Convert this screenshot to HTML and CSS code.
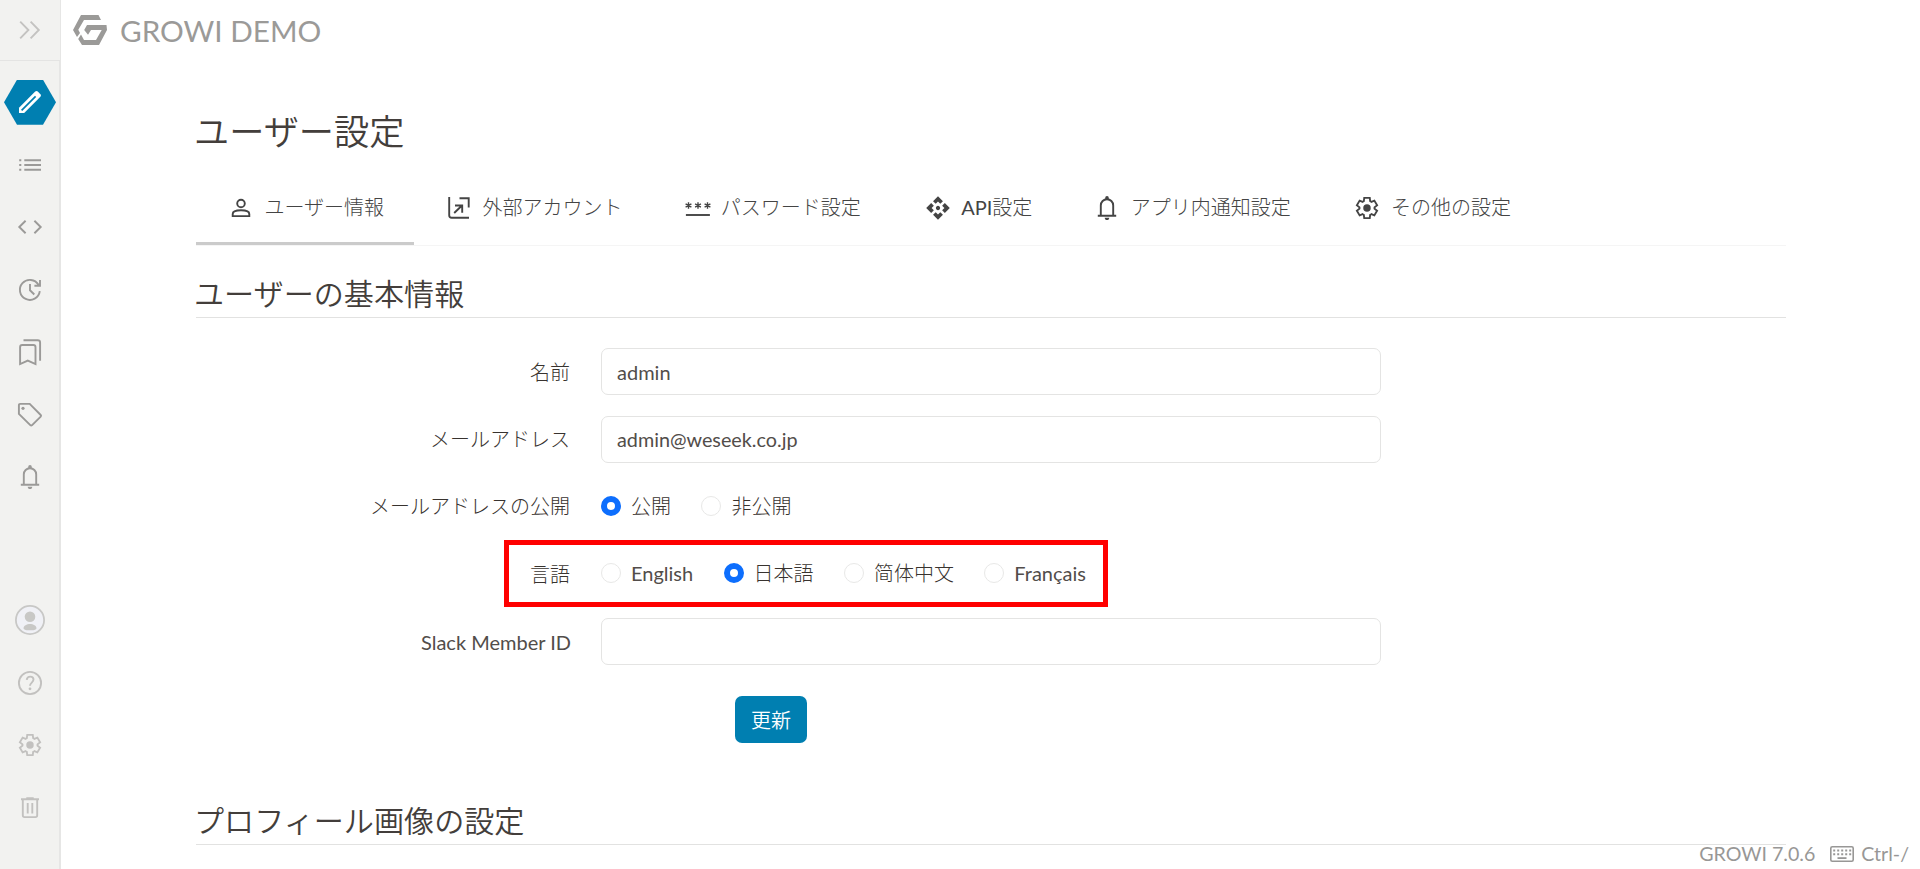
FILE: index.html
```html
<!DOCTYPE html>
<html lang="ja">
<head>
<meta charset="utf-8">
<title>ユーザー設定 - GROWI DEMO</title>
<link rel="stylesheet" href="styles.css">
</head>
<body>
<svg class="defs" width="0" height="0">
  <symbol id="gear" viewBox="0 0 960 960"><g transform="translate(480 480) scale(.93) translate(-480 480)"><path fill="none" stroke="currentColor" stroke-width="74" d="M370-80l-16-128q-13-5-24.500-12T307-235l-119 50L78-375l103-78q-1-7-1-13.500v-27q0-6.500 1-13.500L78-585l110-190 119 50q11-8 23-15t24-12l16-128h220l16 128q13 5 24.500 12t22.500 15l119-50 110 190-103 78q1 7 1 13.500v27q0 6.500-2 13.500l103 78-110 190-118-50q-11 8-23 15t-24 12L590-80H370Z"/><circle cx="480" cy="-480" r="148"/></g></symbol>
  <symbol id="bell" viewBox="0 0 24 24"><path class="line" d="M2.800 19.800h18.400M5.800 19.700V9.400a6.200 6.200 0 0 1 12.400 0v10.300"/><path d="M10.200 3.200V1.900a1.800 1.800 0 0 1 3.600 0v1.300zM9.700 21.800h4.600a2.300 2.300 0 0 1-4.600 0z"/></symbol>
</svg>
<div class="app">
  <aside class="sidebar">
    <button class="toggle" aria-label="expand"><svg class="icon" viewBox="0 0 24 24"><path class="line" d="M2.200 3.600l8.200 8.400-8.200 8.400M12.600 3.600l8.200 8.400-8.200 8.400"/></svg></button>
    <nav class="menu">
      <a class="item"><span class="hex"><svg class="icon" viewBox="0 0 24 24"><path d="M1 23v-5.200L17.200 1.600q1.300-1.200 2.600 0l2.600 2.600q1.200 1.300 0 2.600L6.200 23z"/><path class="groove" d="M3.600 20.400L17.600 6.400"/></svg></span></a>
      <a class="item"><svg class="icon" viewBox="0 0 24 24"><path class="line" d="M6.300 7.200h16.700M6.300 12h16.700M6.300 16.800h16.700M1.200 7.200h2.100M1.200 12h2.100M1.200 16.800h2.100"/></svg></a>
      <a class="item"><svg class="icon" viewBox="0 0 24 24"><path class="line" d="M7.600 5.800L1.300 12l6.300 6.200M16.400 5.800l6.300 6.200-6.300 6.200"/></svg></a>
      <a class="item"><svg class="icon" viewBox="0 0 24 24"><path class="line" d="M21.800 13.200A10 10 0 1 1 20.500 6.800l.8 1M22 2v5.700h-5.600M12 6v6.300l4.300 4.200"/></svg></a>
      <a class="item"><svg class="icon tall" viewBox="0 0 24 28"><path class="line" d="M2.100 26V9.200Q2.100 7 4.200 7h11.200q2.100 0 2.100 2.200V26l-7.700-3.400zM5.500 2.200h14.200q2.400 0 2.400 2.200v18.400"/></svg></a>
      <a class="item"><svg class="icon" viewBox="0 0 24 24"><path class="line" d="M.9 2.200Q.9.900 2.200.9h9.500l11 11.100q.8.900 0 1.700l-8.600 8.400q-.9.900-1.800 0L.9 10.900z"/><circle cx="5" cy="5.300" r="1.600"/></svg></a>
      <a class="item"><svg class="icon"><use href="#bell"/></svg></a>
    </nav>
    <nav class="menu faint">
      <a class="item"><svg class="avatar" viewBox="0 0 30 30"><circle cx="15" cy="15" r="14.100" fill="#f0f1f6" stroke="#c8c8c6" stroke-width="1.800"/><circle cx="15" cy="11.700" r="5.300"/><path d="M8.500 23.500c0-6 13-6 13 0q-1 1.700-3 1.700h-7q-2 0-3-1.700z"/></svg></a>
      <a class="item"><svg class="icon" viewBox="0 0 24 24"><circle class="line" cx="12" cy="12" r="11.100"/><path class="line" d="M8.700 8.800C9.200 6 11 5.600 12.200 5.600c1.800 0 3.300 1.200 3.300 3 0 2.900-3.500 3.200-3.500 6.200"/><circle cx="12" cy="17.800" r="1.400"/></svg></a>
      <a class="item"><svg class="icon gear"><use href="#gear"/></svg></a>
      <a class="item"><svg class="icon" viewBox="0 0 24 24"><path class="line" d="M3 3.300h18M8.300 2.300h7.400M4.800 3.300v16q0 1.800 1.800 1.800h10.800q1.800 0 1.800-1.800v-16M9.700 7v10.500M14.300 7v10.500"/></svg></a>
    </nav>
  </aside>
  <div class="page">
    <header class="brand">
      <svg class="logo" viewBox="0 0 34 30"><path d="M8 0h17.500L28 5H11L5.300 14.800 7 18l-3 4L0 15z"/><path d="M14 10h19.500L34 15l-8 15H9l-3.800-6L8 19.500 11 25h12l5.700-10H18l-3 4.800L11.200 15z"/></svg>
      <span class="brand-name">GROWI DEMO</span>
    </header>
    <main class="content">
      <h1 class="title">ユーザー設定</h1>
      <nav class="tabs">
        <a class="tab active"><svg class="icon tab-icon" viewBox="0 0 24 24"><circle class="line" cx="12" cy="7.500" r="3.800"/><path class="line" d="M3.700 20.100v-2.200C3.700 15.500 8 14.300 12 14.300s8.300 1.200 8.300 3.600v2.200z"/></svg><span>ユーザー情報</span></a>
        <a class="tab"><svg class="icon tab-icon" viewBox="0 0 24 24"><path class="line" d="M2.200 1v18.300q0 2.500 2.500 2.500H22M12.500 2.200h9.200v9.200M7.200 17l7.800-7.500M8 9.500h7.200v7.200"/></svg><span>外部アカウント</span></a>
        <a class="tab password"><svg class="icon tab-icon" viewBox="0 0 24 24"><path class="line thin" d="M3.500 6.300v6.400M.6 7.900l5.800 3.200M6.400 7.900L.6 11.100M13 6.300v6.400M10.100 7.900l5.800 3.200M15.900 7.900l-5.800 3.200M22.500 6.300v6.400M19.600 7.900l5.800 3.200M25.400 7.900l-5.800 3.200"/><path class="line" d="M.9 19h24"/></svg><span>パスワード設定</span></a>
        <a class="tab"><svg class="icon tab-icon" viewBox="0 -960 960 960"><path transform="translate(480 -480) scale(1.070) translate(-480 480)" d="M480-400q-33 0-56.500-23.500T400-480q0-33 23.500-56.500T480-560q33 0 56.500 23.500T560-480q0 33-23.500 56.500T480-400Zm-85-235L295-735l185-185 185 185-100 100-85-85-85 85ZM225-295 40-480l185-185 100 100-85 85 85 85-100 100Zm510 0L635-395l85-85-85-85 100-100 185 185-185 185ZM480-40 295-225l100-100 85 85 85-85 100 100L480-40Z"/></svg><span>API設定</span></a>
        <a class="tab"><svg class="icon tab-icon"><use href="#bell"/></svg><span>アプリ内通知設定</span></a>
        <a class="tab"><svg class="icon gear tab-icon"><use href="#gear"/></svg><span>その他の設定</span></a>
      </nav>
      <h2 class="section-title">ユーザーの基本情報</h2>
      <form class="form">
        <label class="label" for="name">名前</label>
        <input class="input" id="name" value="admin">
        <label class="label" for="mail">メールアドレス</label>
        <input class="input mail" id="mail" value="admin@weseek.co.jp">
        <span class="label">メールアドレスの公開</span>
        <div class="choices">
          <label class="choice"><i class="radio on"></i>公開</label>
          <label class="choice"><i class="radio"></i>非公開</label>
        </div>
        <span class="label">言語</span>
        <div class="choices">
          <label class="choice latin"><i class="radio"></i>English</label>
          <label class="choice"><i class="radio on"></i>日本語</label>
          <label class="choice"><i class="radio"></i>简体中文</label>
          <label class="choice latin"><i class="radio"></i>Français</label>
          <span class="highlight"></span>
        </div>
        <label class="label latin" for="slack">Slack Member ID</label>
        <input class="input" id="slack">
        <button class="submit" type="button">更新</button>
      </form>
      <h2 class="section-title">プロフィール画像の設定</h2>
    </main>
  </div>
  <footer class="system">
    <span>GROWI 7.0.6</span>
    <svg class="keyboard" viewBox="0 0 24 16"><rect x=".8" y=".8" width="22.400" height="14.400" rx="1.500" fill="none" stroke="currentColor" stroke-width="1.600"/><path fill="none" stroke="currentColor" stroke-width="2" stroke-dasharray="2 2" d="M3.200 4.500h18M3.200 8.300h18"/><path d="M7.500 11.200h9v1.800h-9z"/></svg>
    <span>Ctrl-/</span>
  </footer>
</div>
</body>
</html>
```
FILE: styles.css
```css
* { box-sizing: border-box; }
body {
  margin: 0;
  background: #fff;
  color: #38332f;
  font: 20px/30px Lato, "Noto Sans CJK JP Light", "Noto Sans CJK JP", sans-serif;
  overflow: hidden;
}
.defs { position: absolute; }
.app { display: flex; height: 869px; position: relative; }
.icon { width: 24px; height: 24px; fill: currentColor; display: block; flex: none; overflow: visible; }
.icon.tall { height: 28px; }
.icon.gear { width: 26px; height: 26px; }
.line { fill: none; stroke: currentColor; stroke-width: 1.9; }
.line.thin { stroke-width: 1.4; }
.groove { fill: none; stroke: #007fb1; stroke-width: 1.7; }

.sidebar {
  width: 61px;
  flex: none;
  display: flex;
  flex-direction: column;
  background: #f2f2f0;
  border-right: 1px solid #e6e6e5;
  color: #9b9a98;
}
.toggle {
  height: 61px;
  padding: 0;
  display: flex;
  align-items: center;
  justify-content: center;
  border: 0;
  border-bottom: 1px solid #e4e4e3;
  background: none;
  color: #c4c3c1;
}
.menu { display: flex; flex-direction: column; border-right: 1px solid #e6e6e5; padding: 10px 0 0 1px; flex: 1; }
.menu.faint { color: #c2c1bf; justify-content: flex-end; padding-bottom: 30px; }
.item { height: 62.5px; display: flex; align-items: center; justify-content: center; }
.avatar { width: 30px; height: 30px; fill: #c8c8c6; }
.hex {
  width: 52px;
  height: 45px;
  display: flex;
  align-items: center;
  justify-content: center;
  background: #007fb1;
  color: #fff;
  clip-path: polygon(25% 0, 75% 0, 100% 50%, 75% 100%, 25% 100%, 0 50%);
}

.page { flex: 1; }
.brand { display: flex; align-items: center; height: 60px; padding-left: 12px; color: #9b9a98; }
.logo { width: 34px; height: 30px; fill: currentColor; }
.brand-name { font-size: 29.7px; margin: 1px 0 0 13px; }

.content { margin: 0 134px 0 135px; }
.title,
.section-title,
.submit { font-family: Lato, "Noto Sans CJK JP DemiLight", "Noto Sans CJK JP", sans-serif; }
.title { margin: 45px 0 0; font-size: 35.2px; line-height: 52px; font-weight: 400; text-indent: -2px; color: #433e3b; }
.tabs { display: flex; margin-top: 14px; height: 75px; border-bottom: 1px solid #f5f5f5; }
.tab { display: flex; align-items: center; gap: 11.4px; padding: 0 30px 0 33px; color: #444; white-space: nowrap; }
.tab span { margin-top: -2px; }
.tab.active { border-bottom: 3px solid #cbcbcb; padding-top: 3px; }
.tab.password { padding-right: 32px; }
.section-title {
  margin: 25px 0 0;
  height: 47px;
  font-size: 30.1px;
  line-height: 44px;
  font-weight: 400;
  text-indent: -2px;
  color: #433e3b;
  border-bottom: 1px solid #e2e2e1;
}
.form {
  display: grid;
  grid-template-columns: 375px 780px;
  grid-template-rows: 47.6px 46.6px 46.5px 47.6px 47px 47px;
  column-gap: 30px;
  row-gap: 20.4px;
  padding-top: 30px;
  height: 455px;
}
.label { text-align: right; align-self: center; padding-right: 1px; }
.latin { color: #524d4a; }
.label.latin { padding: 1px 0 0; }
.input {
  height: 47px;
  padding: 1px 15px 0;
  border: 1px solid #e4e4e3;
  border-radius: 7px;
  background: none;
  font: inherit;
  color: #524d4a;
}
.input.mail { padding: 0 15px 1px; font-size: 19.8px; }
.choices { display: flex; align-items: center; gap: 30.4px; position: relative; padding-bottom: 1px; }
.choice { display: flex; align-items: center; gap: 10px; }
.radio { width: 20px; height: 20px; border-radius: 50%; border: 1px solid #e8e8e7; background: #fff; }
.radio.on { border: 6px solid #0d6efd; }
.highlight { position: absolute; left: -97px; top: -10px; width: 604px; height: 67px; border: 5px solid #f00; }
.submit {
  grid-column: 2;
  width: 72px;
  height: 47px;
  margin: 11px 0 0 134px;
  border: 0;
  border-radius: 7px;
  background: #007fb1;
  color: #fff;
  font-size: 20px;
  line-height: 30px;
  padding: 0;
}
.system {
  position: absolute;
  right: 11px;
  bottom: 0;
  display: flex;
  align-items: center;
  font-size: 19.6px;
  color: #989796;
}
.keyboard { width: 24px; height: 16px; margin: 0 7px 0 15px; fill: currentColor; }
```
